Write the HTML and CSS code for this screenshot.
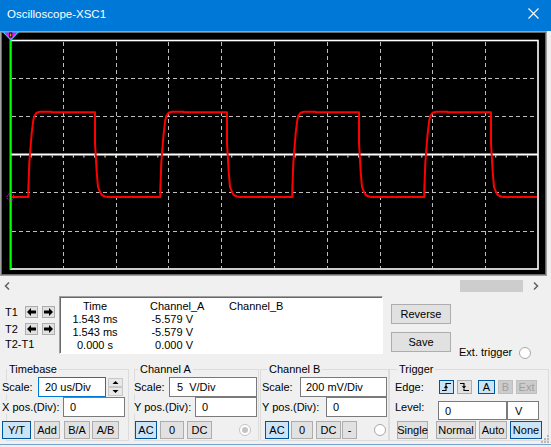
FILE: index.html
```html
<!DOCTYPE html>
<html lang="en">
<head>
    <meta charset="UTF-8">
    <meta name="viewport" content="width=device-width, initial-scale=1.0">
    <title>Oscilloscope-XSC1</title>
    <link rel="stylesheet" href="styles.css">
</head>
<body>

<div class="window">
    <div class="titlebar">
        <span class="title">Oscilloscope-XSC1</span>
        <svg class="close" width="11" height="11" viewBox="0 0 11 11">
            <path d="M0.5 0.5 L10.5 10.5 M10.5 0.5 L0.5 10.5" stroke="#fff" stroke-width="1.1" fill="none"/>
        </svg>
    </div>

    <!-- the scope screen -->
    <svg class="screen" width="551" height="245" viewBox="0 31 551 245">
        <rect x="0" y="31" width="551" height="245" fill="#f0f0f0"/>
        <rect x="0.5" y="31.5" width="546" height="244" fill="#000" stroke="#a0a0a0"/>
        <rect x="1.5" y="32.5" width="544" height="242" fill="none" stroke="#696969"/>

        <g stroke="#bdbdbd" stroke-width="1" stroke-dasharray="4 3">
            <line x1="63.5" y1="42" x2="63.5" y2="268"/>
            <line x1="116.5" y1="42" x2="116.5" y2="268"/>
            <line x1="168.5" y1="42" x2="168.5" y2="268"/>
            <line x1="221.5" y1="42" x2="221.5" y2="268"/>
            <line x1="274.5" y1="42" x2="274.5" y2="268"/>
            <line x1="327.5" y1="42" x2="327.5" y2="268"/>
            <line x1="380.5" y1="42" x2="380.5" y2="268"/>
            <line x1="432.5" y1="42" x2="432.5" y2="268"/>
            <line x1="485.5" y1="42" x2="485.5" y2="268"/>
            <line x1="12" y1="78.5" x2="537" y2="78.5"/>
            <line x1="12" y1="116.5" x2="537" y2="116.5"/>
            <line x1="12" y1="192.5" x2="537" y2="192.5"/>
            <line x1="12" y1="231.5" x2="537" y2="231.5"/>
        </g>
        <rect x="10.5" y="40.5" width="527.5" height="228.5" fill="none" stroke="#fff" stroke-width="1.6"/>

        <!-- channel B trace -->
        <line x1="10" y1="154.5" x2="538" y2="154.5" stroke="#fff" stroke-width="2"/>
        <line x1="20.06" y1="156.5" x2="538" y2="156.5" stroke="#fff" stroke-width="2" stroke-dasharray="1 9.56"/>

        <!-- channel A trace -->
        <path fill="none" stroke="#ff0000" stroke-width="2" stroke-linejoin="round"
              d="M12 197 H28.3
                 v-7 l1 -27 l1.4 -18 l1 -12 l1 -8 l0.6 -5 l1 -4 l2.4 -3.3 l3.3 -1 h11.7 v0.6 h43.3 v30.7 l1.7 29 l1.3 15 l2 5 l1.7 3 l3.3 1.5 l3 0.5 h52.3
                 v-7 l1 -27 l1.4 -18 l1 -12 l1 -8 l0.6 -5 l1 -4 l2.4 -3.3 l3.3 -1 h11.7 v0.6 h43.3 v30.7 l1.7 29 l1.3 15 l2 5 l1.7 3 l3.3 1.5 l3 0.5 h52.3
                 v-7 l1 -27 l1.4 -18 l1 -12 l1 -8 l0.6 -5 l1 -4 l2.4 -3.3 l3.3 -1 h11.7 v0.6 h43.3 v30.7 l1.7 29 l1.3 15 l2 5 l1.7 3 l3.3 1.5 l3 0.5 h52.3
                 v-7 l1 -27 l1.4 -18 l1 -12 l1 -8 l0.6 -5 l1 -4 l2.4 -3.3 l3.3 -1 h11.7 v0.6 h43.3 v30.7 l1.7 29 l1.3 15 l2 5 l1.7 3 l3.3 1.5 l3 0.5 H537"/>

        <!-- cursor -->
        <line x1="10.8" y1="38" x2="10.8" y2="269" stroke="#00ff00" stroke-width="1.6"/>
        <circle cx="10.5" cy="197" r="3.5" fill="none" stroke="#ff00ff" stroke-width="1" stroke-dasharray="1.5 1.2"/>
        <polygon points="3,31.8 18.5,31.8 10.8,40" fill="#ff00ff" stroke="#00e0e0" stroke-width="1.2"/>
        <rect x="9.3" y="32.5" width="3" height="5" fill="#000"/>
        <line x1="10.8" y1="33.5" x2="10.8" y2="36.5" stroke="#ffff00" stroke-width="1"/>
    </svg>

    <div class="hscroll">
        <svg class="sarrow left" width="8" height="12" viewBox="0 0 8 12"><path d="M6 2.5 L2.5 6 L6 9.5" stroke="#606060" stroke-width="1.5" fill="none"/></svg>
        <div class="thumb"></div>
        <svg class="sarrow right" width="8" height="12" viewBox="0 0 8 12"><path d="M2 2.5 L5.5 6 L2 9.5" stroke="#606060" stroke-width="1.5" fill="none"/></svg>
    </div>

    <div class="readrow">
        <div class="cursors">
            <div class="crow">
                <span class="clbl">T1</span>
                <span class="abtn"><svg width="11" height="10" viewBox="0 0 11 10"><path d="M1 5 L5 1 V3.5 H10 V6.5 H5 V9 Z" fill="#000"/></svg></span>
                <span class="abtn"><svg width="11" height="10" viewBox="0 0 11 10"><path d="M10 5 L6 1 V3.5 H1 V6.5 H6 V9 Z" fill="#000"/></svg></span>
            </div>
            <div class="crow second">
                <span class="clbl">T2</span>
                <span class="abtn"><svg width="11" height="10" viewBox="0 0 11 10"><path d="M1 5 L5 1 V3.5 H10 V6.5 H5 V9 Z" fill="#000"/></svg></span>
                <span class="abtn"><svg width="11" height="10" viewBox="0 0 11 10"><path d="M10 5 L6 1 V3.5 H1 V6.5 H6 V9 Z" fill="#000"/></svg></span>
            </div>
            <div class="tdiff">T2-T1</div>
        </div>

        <div class="readout">
            <span class="c1">Time</span><span class="c2h">Channel_A</span><span class="c3">Channel_B</span>
            <span class="c1">1.543 ms</span><span class="c2">-5.579 V</span><span class="c3"></span>
            <span class="c1">1.543 ms</span><span class="c2">-5.579 V</span><span class="c3"></span>
            <span class="c1">0.000 s</span><span class="c2">0.000 V</span><span class="c3"></span>
        </div>

        <div class="sidebtns">
            <div class="btn wide">Reverse</div>
            <div class="btn wide">Save</div>
        </div>

        <div class="ext">Ext. trigger <span class="radio"></span></div>
    </div>

    <div class="controls">
        <fieldset class="group timebase">
            <legend>Timebase</legend>
            <div class="frow">
                <span class="lbl" style="width:36px">Scale:</span>
                <div class="field focus" style="width:68px">20 us/Div</div>
                <svg class="spin" width="15" height="18" viewBox="0 0 15 18">
                    <rect x="0.5" y="0.5" width="14" height="8" fill="#e8e8e8" stroke="#c8c8c8"/>
                    <rect x="0.5" y="9.5" width="14" height="8" fill="#e8e8e8" stroke="#c8c8c8"/>
                    <path d="M4.5 6 L7.5 3 L10.5 6 Z" fill="#000"/>
                    <path d="M4.5 12 L7.5 15 L10.5 12 Z" fill="#000"/>
                </svg>
            </div>
            <div class="frow">
                <span class="lbl" style="width:61px">X pos.(Div):</span>
                <div class="field" style="width:62px">0</div>
            </div>
            <div class="brow">
                <div class="btn on" style="width:29px">Y/T</div>
                <div class="btn" style="width:26px;margin-left:3px">Add</div>
                <div class="btn" style="width:26px;margin-left:4px">B/A</div>
                <div class="btn" style="width:27px;margin-left:2px">A/B</div>
            </div>
        </fieldset>

        <fieldset class="group chana">
            <legend>Channel A</legend>
            <div class="frow">
                <span class="lbl" style="width:35px">Scale:</span>
                <div class="field" style="width:88px;padding-left:7px">5  V/Div</div>
            </div>
            <div class="frow">
                <span class="lbl" style="width:61px">Y pos.(Div):</span>
                <div class="field" style="width:62px">0</div>
            </div>
            <div class="brow">
                <div class="btn on" style="width:22px">AC</div>
                <div class="btn" style="width:24px;margin-left:3px">0</div>
                <div class="btn" style="width:25px;margin-left:3px">DC</div>
                <span class="radio dis" style="margin-left:27px"></span>
            </div>
        </fieldset>

        <fieldset class="group chanb">
            <legend>Channel B</legend>
            <div class="frow">
                <span class="lbl" style="width:38px">Scale:</span>
                <div class="field" style="width:87px;padding-left:5px">200 mV/Div</div>
            </div>
            <div class="frow">
                <span class="lbl" style="width:64px">Y pos.(Div):</span>
                <div class="field" style="width:61px">0</div>
            </div>
            <div class="brow">
                <div class="btn on" style="width:24px">AC</div>
                <div class="btn" style="width:22px;margin-left:2px">0</div>
                <div class="btn" style="width:25px;margin-left:3px">DC</div>
                <div class="btn" style="width:15px;margin-left:1px">-</div>
                <span class="radio" style="margin-left:17px"></span>
            </div>
        </fieldset>

        <fieldset class="group trigger">
            <legend>Trigger</legend>
            <div class="frow">
                <span class="lbl" style="width:44px">Edge:</span>
                <div class="btn small on" style="width:15px">
                    <svg width="11" height="10" viewBox="0 0 11 10"><path d="M1 8.5 H5 V1.5 H10 M3.5 6 L5 4 L6.5 6" stroke="#000" stroke-width="1.1" fill="none"/></svg>
                </div>
                <div class="btn small" style="width:15px;margin-left:3px">
                    <svg width="11" height="10" viewBox="0 0 11 10"><path d="M1 1.5 H5 V8.5 H10 M3.5 4 L5 6 L6.5 4" stroke="#000" stroke-width="1.1" fill="none"/></svg>
                </div>
                <div class="btn small on" style="width:17px;margin-left:6px">A</div>
                <div class="btn small off" style="width:15px;margin-left:3px">B</div>
                <div class="btn small off" style="width:21px;margin-left:3px">Ext</div>
            </div>
            <div class="frow level">
                <span class="lbl" style="width:43px">Level:</span>
                <div class="field" style="width:69px">0</div>
                <div class="field" style="width:32px;padding-left:7px">V</div>
            </div>
            <div class="brow">
                <div class="btn" style="width:31px">Single</div>
                <div class="btn" style="width:40px;margin-left:8px">Normal</div>
                <div class="btn" style="width:28px;margin-left:3px">Auto</div>
                <div class="btn on" style="width:32px;margin-left:3px">None</div>
            </div>
        </fieldset>
    </div>
    <div class="bottomedge"></div>

    <svg class="grip" width="9" height="9" viewBox="0 0 9 9">
        <g fill="#b8b8b8">
            <rect x="7" y="1" width="2" height="2"/>
            <rect x="4" y="4" width="2" height="2"/>
            <rect x="7" y="4" width="2" height="2"/>
            <rect x="1" y="7" width="2" height="2"/>
            <rect x="4" y="7" width="2" height="2"/>
            <rect x="7" y="7" width="2" height="2"/>
        </g>
    </svg>
</div>

</body>
</html>
```

FILE: styles.css
```css
body {
    margin: 0;
    background: #f0f0f0;
    font-family: "Liberation Sans", Arial, sans-serif;
    font-size: 11px;
    color: #000;
}
.window {
    position: relative;
    width: 551px;
    height: 447px;
    overflow: hidden;
    display: flex;
    flex-direction: column;
}
.titlebar {
    flex: none;
    height: 31px;
    background: #0078d7;
    color: #fff;
    display: flex;
    justify-content: space-between;
    align-items: flex-start;
}
.title {
    margin: 8px 0 0 7px;
    font-size: 11.5px;
    line-height: 13px;
}
.close {
    margin: 8px 12px 0 0;
}
.screen {
    display: block;
    flex: none;
}

/* scroll bar under the screen */
.hscroll {
    flex: none;
    height: 17px;
    padding-top: 4px;
    box-sizing: border-box;
    display: flex;
    align-items: flex-start;
}
.sarrow.left { margin-left: 3px; }
.thumb {
    margin-left: auto;
    width: 63px;
    height: 12px;
    background: #cdcdcd;
}
.sarrow.right { margin: 0 11px 0 9px; }

/* cursor readout row */
.readrow {
    flex: none;
    height: 62px;
    display: flex;
    align-items: flex-start;
}
.cursors {
    width: 59px;
    flex: none;
    box-sizing: border-box;
    padding: 13px 0 0 5px;
}
.crow {
    display: flex;
    align-items: center;
    height: 12px;
}
.crow.second { margin-top: 5px; }
.clbl {
    width: 20px;
    line-height: 13px;
}
.abtn {
    box-sizing: border-box;
    width: 13px;
    height: 12px;
    margin-right: 4px;
    border: 1px solid #adadad;
    background: #e1e1e1;
    display: flex;
    align-items: center;
    justify-content: center;
}
.tdiff {
    margin-top: 3px;
    line-height: 13px;
}
.readout {
    flex: none;
    box-sizing: border-box;
    width: 324px;
    height: 58px;
    margin-top: 3px;
    padding-top: 3px;
    background: #fff;
    border: 1px solid;
    border-color: #a0a0a0 #fff #fff #a0a0a0;
    box-shadow: inset 1px 1px 0 #696969;
    display: grid;
    grid-template-columns: 70px 80px 1fr;
    grid-auto-rows: 13px;
    line-height: 13px;
}
.c1 { text-align: center; }
.c2h { padding-left: 20px; }
.c2 { text-align: right; padding-right: 17px; }
.c3 { padding-left: 19px; }

.sidebtns {
    margin-left: 8px;
    padding-top: 11px;
    display: flex;
    flex-direction: column;
    gap: 8px;
}
.ext {
    margin: 53px 0 0 8px;
    display: flex;
    align-items: center;
    line-height: 13px;
}
.ext .radio { margin-left: 7px; }

/* buttons, fields, radios */
.btn {
    box-sizing: border-box;
    height: 18px;
    border: 1px solid #adadad;
    background: #e1e1e1;
    display: flex;
    align-items: center;
    justify-content: center;
    flex: none;
}
.btn.wide {
    width: 60px;
    height: 20px;
}
.btn.small { height: 14px; }
.btn.on {
    background: #cce4f7;
    border-color: #005499;
}
.btn.off {
    background: #cccccc;
    border-color: #bfbfbf;
    color: #a0a0a0;
}
.field {
    box-sizing: border-box;
    height: 20px;
    padding-left: 6px;
    border: 1px solid #7a7a7a;
    background: #fff;
    display: flex;
    align-items: center;
    white-space: pre;
    flex: none;
}
.field.focus { border-color: #0078d7; }
.radio {
    box-sizing: border-box;
    width: 12px;
    height: 12px;
    border: 1px solid #a8a8a8;
    border-radius: 50%;
    background: #fff;
    display: flex;
    align-items: center;
    justify-content: center;
    flex: none;
}
.radio.dis { border-color: #c4c4c4; }
.radio.dis::after {
    content: "";
    width: 6px;
    height: 6px;
    border-radius: 50%;
    background: #c4c4c4;
}

/* group boxes */
.controls {
    flex: none;
    height: 89px;
    display: flex;
    align-items: flex-start;
}
.group {
    box-sizing: border-box;
    margin: 8px 0 0 0;
    padding: 0 0 1px 0;
    border: 1px solid #dcdcdc;
    min-width: 0;
    flex: none;
}
.group legend {
    padding: 0 2px;
    line-height: 13px;
}
.timebase { margin-left: 6px; width: 123px; }
.chana { margin-left: 5px; width: 125px; }
.chana legend { margin-left: 3px; }
.chanb { margin-left: 1px; width: 129px; }
.chanb legend { margin-left: 6px; }
.trigger { width: 160px; }
.trigger legend { margin-left: 7px; }

.frow {
    display: flex;
    align-items: center;
    height: 20px;
}
.frow:first-of-type { margin-top: 1px; }
.lbl {
    background: #f0f0f0;
    line-height: 13px;
    flex: none;
}
.spin { margin-left: 2px; }
.brow {
    display: flex;
    align-items: center;
    height: 18px;
    margin-top: 4px;
}
.timebase .lbl,
.timebase .brow { margin-left: -5px; }
.chana .lbl { margin-left: -1px; }
.chanb .lbl { margin-left: 1px; }
.chanb .brow { margin-left: 4px; }
.trigger .lbl { margin-left: 5px; }
.trigger .brow { margin-left: 7px; }
.trigger .level {
    align-items: flex-start;
}
.trigger .level .lbl { margin-top: 4px; }
.trigger .level .field {
    margin-top: 4px;
    height: 19px;
}

.bottomedge {
    flex: none;
    height: 3px;
    border-top: 1px solid #7ba2cc;
}
.grip {
    position: absolute;
    right: 2px;
    bottom: 4px;
}
```
